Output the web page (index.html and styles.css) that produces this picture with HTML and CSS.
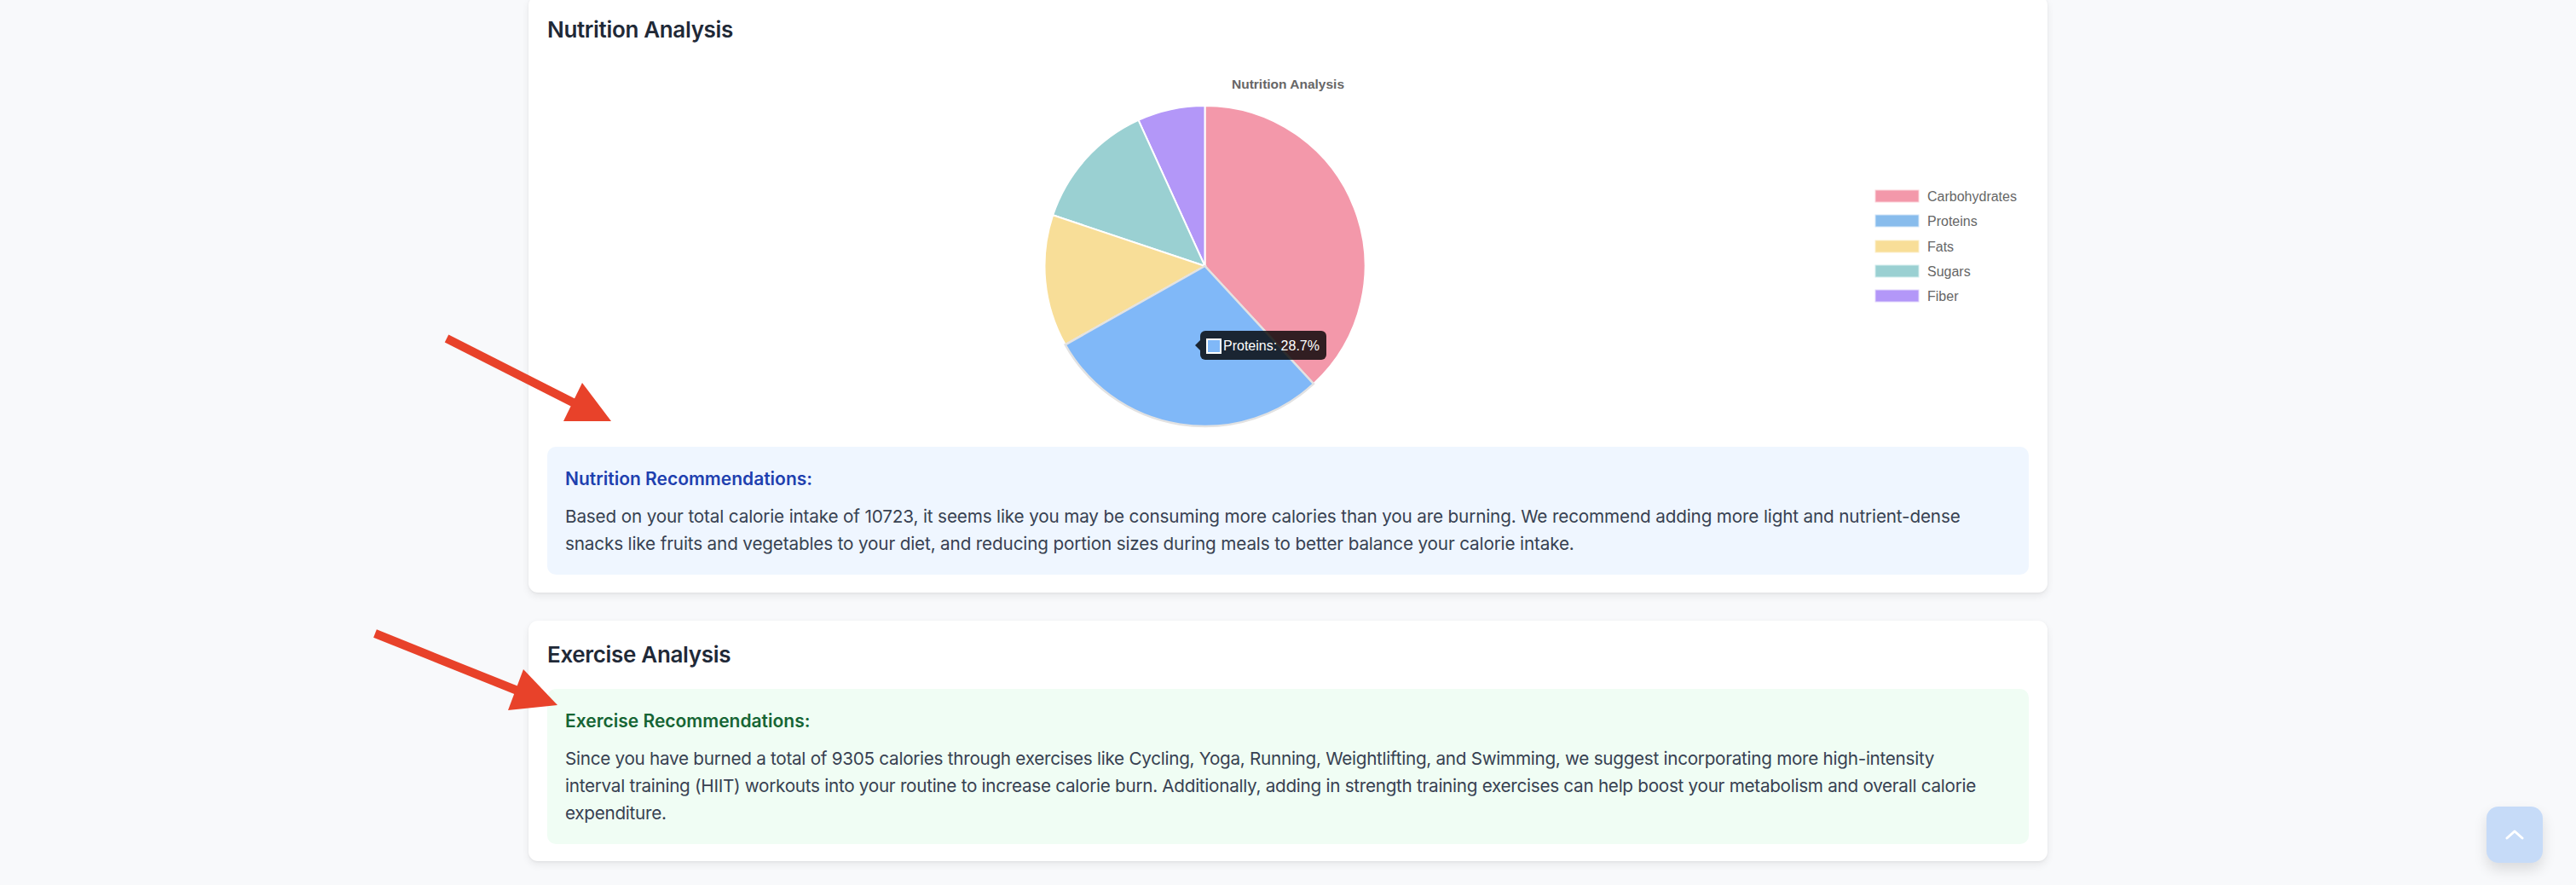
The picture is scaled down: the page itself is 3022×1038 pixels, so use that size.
FILE: index.html
```html
<!DOCTYPE html>
<html lang="en">
<head>
<meta charset="utf-8">
<title>Analysis</title>
<link rel="stylesheet" href="styles.css">
</head>
<body>
<main class="page">
  <section class="card card-nutrition">
    <h2 class="card-title">Nutrition Analysis</h2>
    <div class="chart">
      <svg class="chart-svg" width="1738" height="433" viewBox="0 0 1738 433" xmlns="http://www.w3.org/2000/svg">
        <text class="chart-title" x="869" y="29" text-anchor="middle">Nutrition Analysis</text>
        <g class="pie">
          <path d="M771.5 237 L771.5 49 A188 188 0 0 1 899.0 375.2 Z" fill="#F398AA" stroke="#fff" stroke-width="2"/>
          <path d="M771.5 237 L693.5 65.9 A188 188 0 0 1 771.5 49 Z" fill="#B397F8" stroke="#fff" stroke-width="2"/>
          <path d="M771.5 237 L593.2 177.3 A188 188 0 0 1 693.5 65.9 Z" fill="#9AD0D2" stroke="#fff" stroke-width="2"/>
          <path d="M771.5 237 L607.7 329.3 A188 188 0 0 1 593.2 177.3 Z" fill="#F8DE98" stroke="#fff" stroke-width="2"/>
          <path d="M771.5 237 L899.0 375.2 A188 188 0 0 1 607.7 329.3 Z" fill="#80B8F8" stroke="#E2E2E2" stroke-width="2.5"/>
        </g>
        <g class="legend">
          <rect x="1558" y="148" width="51" height="14" fill="#F398AA" stroke="#FBD3DA" stroke-width="1"/>
          <text x="1619" y="161">Carbohydrates</text>
          <rect x="1558" y="177" width="51" height="14" fill="#88BCEC" stroke="#D3E6F8" stroke-width="1"/>
          <text x="1619" y="190">Proteins</text>
          <rect x="1558" y="207" width="51" height="14" fill="#F8DE98" stroke="#FCEFCC" stroke-width="1"/>
          <text x="1619" y="220">Fats</text>
          <rect x="1558" y="236" width="51" height="14" fill="#9AD0D2" stroke="#D2ECED" stroke-width="1"/>
          <text x="1619" y="249">Sugars</text>
          <rect x="1558" y="265" width="51" height="14" fill="#B397F8" stroke="#E1D6FC" stroke-width="1"/>
          <text x="1619" y="278">Fiber</text>
        </g>
        <g class="tooltip">
          <polygon points="760,330 766,324 766,336" fill="rgba(0,0,0,0.8)"/>
          <rect x="766" y="313" width="148" height="34" rx="6" fill="rgba(0,0,0,0.8)"/>
          <rect x="774" y="323" width="16" height="16" fill="#80B8F8" stroke="#fff" stroke-width="2"/>
          <text x="793" y="336">Proteins: 28.7%</text>
        </g>
      </svg>
    </div>
    <div class="rec rec-blue">
      <h3 class="rec-title">Nutrition Recommendations:</h3>
      <p class="rec-text">Based on your total calorie intake of 10723, it seems like you may be consuming more calories than you are burning. We recommend adding more light and nutrient-dense snacks like fruits and vegetables to your diet, and reducing portion sizes during meals to better balance your calorie intake.</p>
    </div>
  </section>

  <section class="card card-exercise">
    <h2 class="card-title">Exercise Analysis</h2>
    <div class="rec rec-green">
      <h3 class="rec-title">Exercise Recommendations:</h3>
      <p class="rec-text rec-text-tight">Since you have burned a total of 9305 calories through exercises like Cycling, Yoga, Running, Weightlifting, and Swimming, we suggest incorporating more high-intensity<br>interval training (HIIT) workouts into your routine to increase calorie burn. Additionally, adding in strength training exercises can help boost your metabolism and overall calorie expenditure.</p>
    </div>
  </section>
</main>

<svg class="annotations" width="3022" height="1038" viewBox="0 0 3022 1038" xmlns="http://www.w3.org/2000/svg" aria-hidden="true">
  <line x1="524" y1="397" x2="674" y2="473" stroke="#E8422A" stroke-width="10"/>
  <polygon points="683,449 661,494 717,494" fill="#E8422A"/>
  <line x1="440" y1="743" x2="607" y2="810" stroke="#E8422A" stroke-width="10"/>
  <polygon points="614,785 596,833 654,827" fill="#E8422A"/>
</svg>

<button class="to-top" type="button" aria-label="Scroll to top">
  <svg width="22" height="12" viewBox="0 0 22 12" xmlns="http://www.w3.org/2000/svg">
    <path d="M2 10 L11 2 L20 10" fill="none" stroke="#fff" stroke-width="3" stroke-linecap="round" stroke-linejoin="round"/>
  </svg>
</button>
</body>
</html>
```

FILE: styles.css
```css
* {
  box-sizing: border-box;
}

html, body {
  margin: 0;
  padding: 0;
}

body {
  background: #f8f9fb;
  font-family: Inter, "Noto Sans", "Liberation Sans", sans-serif;
  color: #374151;
  width: 3022px;
  height: 1038px;
  overflow: hidden;
  position: relative;
}

.page {
  width: 1782px;
  margin: -5px auto 0;
  display: flex;
  flex-direction: column;
  gap: 33px;
}

.card {
  background: #fff;
  border-radius: 11px;
  padding: 22px 22px 21px;
  box-shadow: 0 4px 10px rgba(0, 0, 0, 0.07), 0 1px 3px rgba(0, 0, 0, 0.05);
}

.card-exercise {
  padding-bottom: 20px;
}

.card-title {
  margin: 0 0 22px;
  font-size: 26px;
  line-height: 36px;
  font-weight: 600;
  letter-spacing: -0.33px;
  color: #1f2937;
}

.chart {
  margin-bottom: 16px;
}

.chart-svg {
  display: block;
}

.chart-title {
  font-family: "Liberation Sans", Arial, sans-serif;
  font-weight: 700;
  font-size: 15.5px;
  fill: #666;
}

.legend text {
  font-family: "Liberation Sans", Arial, sans-serif;
  font-size: 16px;
  fill: #666;
}

.tooltip text {
  font-family: "Liberation Sans", Arial, sans-serif;
  font-size: 16px;
  fill: #fff;
}

.rec {
  border-radius: 10px;
  padding: 22px 21px 20px;
}

.rec-blue {
  background: #eff6ff;
}

.rec-green {
  background: #f0fdf4;
}

.rec-title {
  margin: 0 0 12px;
  font-size: 21px;
  line-height: 32px;
  font-weight: 600;
}

.rec-blue .rec-title {
  color: #1e40af;
}

.rec-green .rec-title {
  color: #166534;
}

.rec-text {
  margin: 0;
  font-size: 20.7px;
  line-height: 32px;
  letter-spacing: -0.15px;
  color: #374151;
}

.rec-text-tight {
  letter-spacing: -0.28px;
}

.annotations {
  position: absolute;
  top: 0;
  left: 0;
  pointer-events: none;
}

.to-top {
  position: fixed;
  right: 39px;
  bottom: 26px;
  width: 66px;
  height: 66px;
  border: none;
  border-radius: 14px;
  background: #c6dbf8;
  box-shadow: 0 8px 16px rgba(0, 0, 0, 0.12);
  display: flex;
  align-items: center;
  justify-content: center;
  padding: 0;
}
```
